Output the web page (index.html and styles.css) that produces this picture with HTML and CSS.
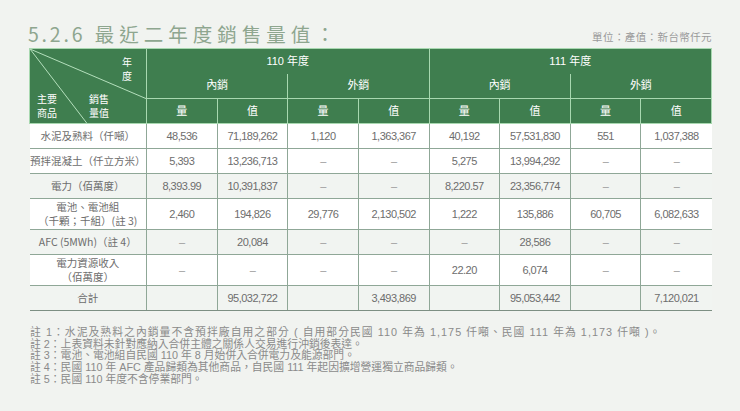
FILE: index.html
```html
<!DOCTYPE html>
<html lang="zh-Hant">
<head>
<meta charset="utf-8">
<link rel="stylesheet" href="styles.css">
</head>
<body>
<div class="page">
  <div class="head">
    <h1 class="title"><span class="num">5.2.6</span> 最近二年度銷售量值：</h1>
    <div class="unit">單位：產值：新台幣仟元</div>
  </div>
  <table class="sales">
    <colgroup>
      <col class="c-first">
      <col><col><col><col><col><col><col><col>
    </colgroup>
    <thead>
      <tr class="h1">
        <th rowspan="3" class="corner">
          <svg class="diag" viewBox="0 0 117 75" preserveAspectRatio="none">
            <line x1="0" y1="0" x2="117" y2="50" stroke="#b4dfbc" stroke-width="1"/>
            <line x1="0" y1="0" x2="59" y2="77" stroke="#b4dfbc" stroke-width="1"/>
          </svg>
          <span class="lbl lbl-year">年<br>度</span>
          <span class="lbl lbl-item">主要<br>商品</span>
          <span class="lbl lbl-sales">銷售<br>量值</span>
        </th>
        <th colspan="4" class="year">110 年度</th>
        <th colspan="4" class="year">111 年度</th>
      </tr>
      <tr class="h2">
        <th colspan="2" class="sub">內銷</th>
        <th colspan="2" class="sub">外銷</th>
        <th colspan="2" class="sub">內銷</th>
        <th colspan="2" class="sub">外銷</th>
      </tr>
      <tr class="h3">
        <th>量</th><th>值</th><th>量</th><th>值</th><th>量</th><th>值</th><th>量</th><th>值</th>
      </tr>
    </thead>
    <tbody>
      <tr class="r">
        <td class="name">水泥及熟料（仟噸）</td>
        <td>48,536</td><td>71,189,262</td><td>1,120</td><td>1,363,367</td>
        <td>40,192</td><td>57,531,830</td><td>551</td><td>1,037,388</td>
      </tr>
      <tr class="r">
        <td class="name">預拌混凝土（仟立方米）</td>
        <td>5,393</td><td>13,236,713</td><td class="dash">–</td><td class="dash">–</td>
        <td>5,275</td><td>13,994,292</td><td class="dash">–</td><td class="dash">–</td>
      </tr>
      <tr class="r alt">
        <td class="name">電力（佰萬度）</td>
        <td>8,393.99</td><td>10,391,837</td><td class="dash">–</td><td class="dash">–</td>
        <td>8,220.57</td><td>23,356,774</td><td class="dash">–</td><td class="dash">–</td>
      </tr>
      <tr class="r tall">
        <td class="name">電池、電池組<br>（千顆；千組）(註 3)</td>
        <td>2,460</td><td>194,826</td><td>29,776</td><td>2,130,502</td>
        <td>1,222</td><td>135,886</td><td>60,705</td><td>6,082,633</td>
      </tr>
      <tr class="r alt">
        <td class="name">AFC (5MWh)（註 4）</td>
        <td class="dash">–</td><td>20,084</td><td class="dash">–</td><td class="dash">–</td>
        <td class="dash">–</td><td>28,586</td><td class="dash">–</td><td class="dash">–</td>
      </tr>
      <tr class="r tall">
        <td class="name">電力資源收入<br>（佰萬度）</td>
        <td class="dash">–</td><td class="dash">–</td><td class="dash">–</td><td class="dash">–</td>
        <td>22.20</td><td>6,074</td><td class="dash">–</td><td class="dash">–</td>
      </tr>
      <tr class="r alt last">
        <td class="name">合計</td>
        <td></td><td>95,032,722</td><td></td><td>3,493,869</td>
        <td></td><td>95,053,442</td><td></td><td>7,120,021</td>
      </tr>
    </tbody>
  </table>
  <div class="notes">
    <p class="n1">註 1：水泥及熟料之內銷量不含預拌廠自用之部分 ( 自用部分民國 110 年為 1,175 仟噸、民國 111 年為 1,173 仟噸 )。</p>
    <p>註 2：上表資料未針對應納入合併主體之關係人交易進行沖銷後表達。</p>
    <p>註 3：電池、電池組自民國 110 年 8 月始併入合併電力及能源部門。</p>
    <p>註 4：民國 110 年 AFC 產品歸類為其他商品，自民國 111 年起因擴增營運獨立商品歸類。</p>
    <p>註 5：民國 110 年度不含停業部門。</p>
  </div>
</div>
</body>
</html>
```

FILE: styles.css
```css
html, body {
  margin: 0;
  padding: 0;
  background: #f1f3f0;
}
body {
  font-family: "Liberation Sans", "Noto Sans CJK TC", sans-serif;
  color: #6b6b6b;
  width: 740px;
  height: 411px;
  overflow: hidden;
}
.page {
  padding: 9px 28px 0 29px;
}
.head {
  display: flex;
  justify-content: space-between;
  align-items: flex-end;
  height: 39px;
}
.title {
  margin: 0;
  font-family: "Noto Sans CJK TC", sans-serif;
  font-weight: 400;
  font-size: 19.5px;
  line-height: 28px;
  letter-spacing: 5px;
  color: #8ea68f;
  margin-left: -1px;
}
.title .num {
  letter-spacing: 2.8px;
}
.unit {
  font-family: "Noto Sans CJK TC", sans-serif;
  font-size: 10.5px;
  line-height: 14px;
  color: #9a9a9a;
  letter-spacing: 0.4px;
  padding-bottom: 4px;
}
.sales {
  border-collapse: collapse;
  table-layout: fixed;
  width: 683px;
  margin: 0;
}
.c-first {
  width: 117px;
}
.sales th {
  background: #3f7e4f;
  color: #ffffff;
  font-weight: 400;
  font-size: 11px;
  font-family: "Liberation Sans", "Noto Sans CJK TC", sans-serif;
  border: 1px solid #a8d8b0;
  padding: 0;
  text-align: center;
  vertical-align: middle;
  line-height: 13px;
}
.h1 { height: 25px; }
.h2 { height: 25px; }
.h3 { height: 25px; }
.sales th.year {
  border-bottom: none;
  vertical-align: top;
  padding-top: 6px;
}
.sales th.sub {
  border-top: none;
}
.corner {
  position: relative;
  overflow: hidden;
}
.diag {
  position: absolute;
  left: 0;
  top: 0;
  width: 117px;
  height: 75px;
}
.lbl {
  position: absolute;
  font-family: "Noto Sans CJK TC", sans-serif;
  font-size: 10px;
  line-height: 14px;
  text-align: left;
}
.lbl-year { left: 92px; top: 6px; }
.lbl-item { left: 7px; top: 43px; }
.lbl-sales { left: 59px; top: 43px; }

.sales td {
  border: 1px solid #8fa797;
  background: #ffffff;
  padding: 0;
  text-align: center;
  vertical-align: middle;
  font-size: 11px;
  line-height: 13px;
  letter-spacing: -0.5px;
  color: #6d6d6d;
}
.sales td:first-child { border-left: none; }
.sales td:last-child { border-right: none; }
.sales td.name {
  font-family: "Noto Sans CJK TC", sans-serif;
  font-size: 10.5px;
  line-height: 14px;
  letter-spacing: 0;
}
.sales td.dash { color: #9a9a9a; }
.r { height: 25px; }
.r.tall { height: 31px; }
.r.alt td { background: #f1f4f1; }
.r.last td { border-bottom: 1px solid #7d8f83; }

.notes {
  margin-top: 16px;
  margin-left: 1px;
  font-family: "Liberation Sans", "Noto Sans CJK TC", sans-serif;
  font-size: 10.8px;
  line-height: 11.7px;
  color: #8a8a8a;
}
.notes p {
  margin: 0;
  white-space: nowrap;
}
.notes .n1 {
  letter-spacing: 1.05px;
}
```
